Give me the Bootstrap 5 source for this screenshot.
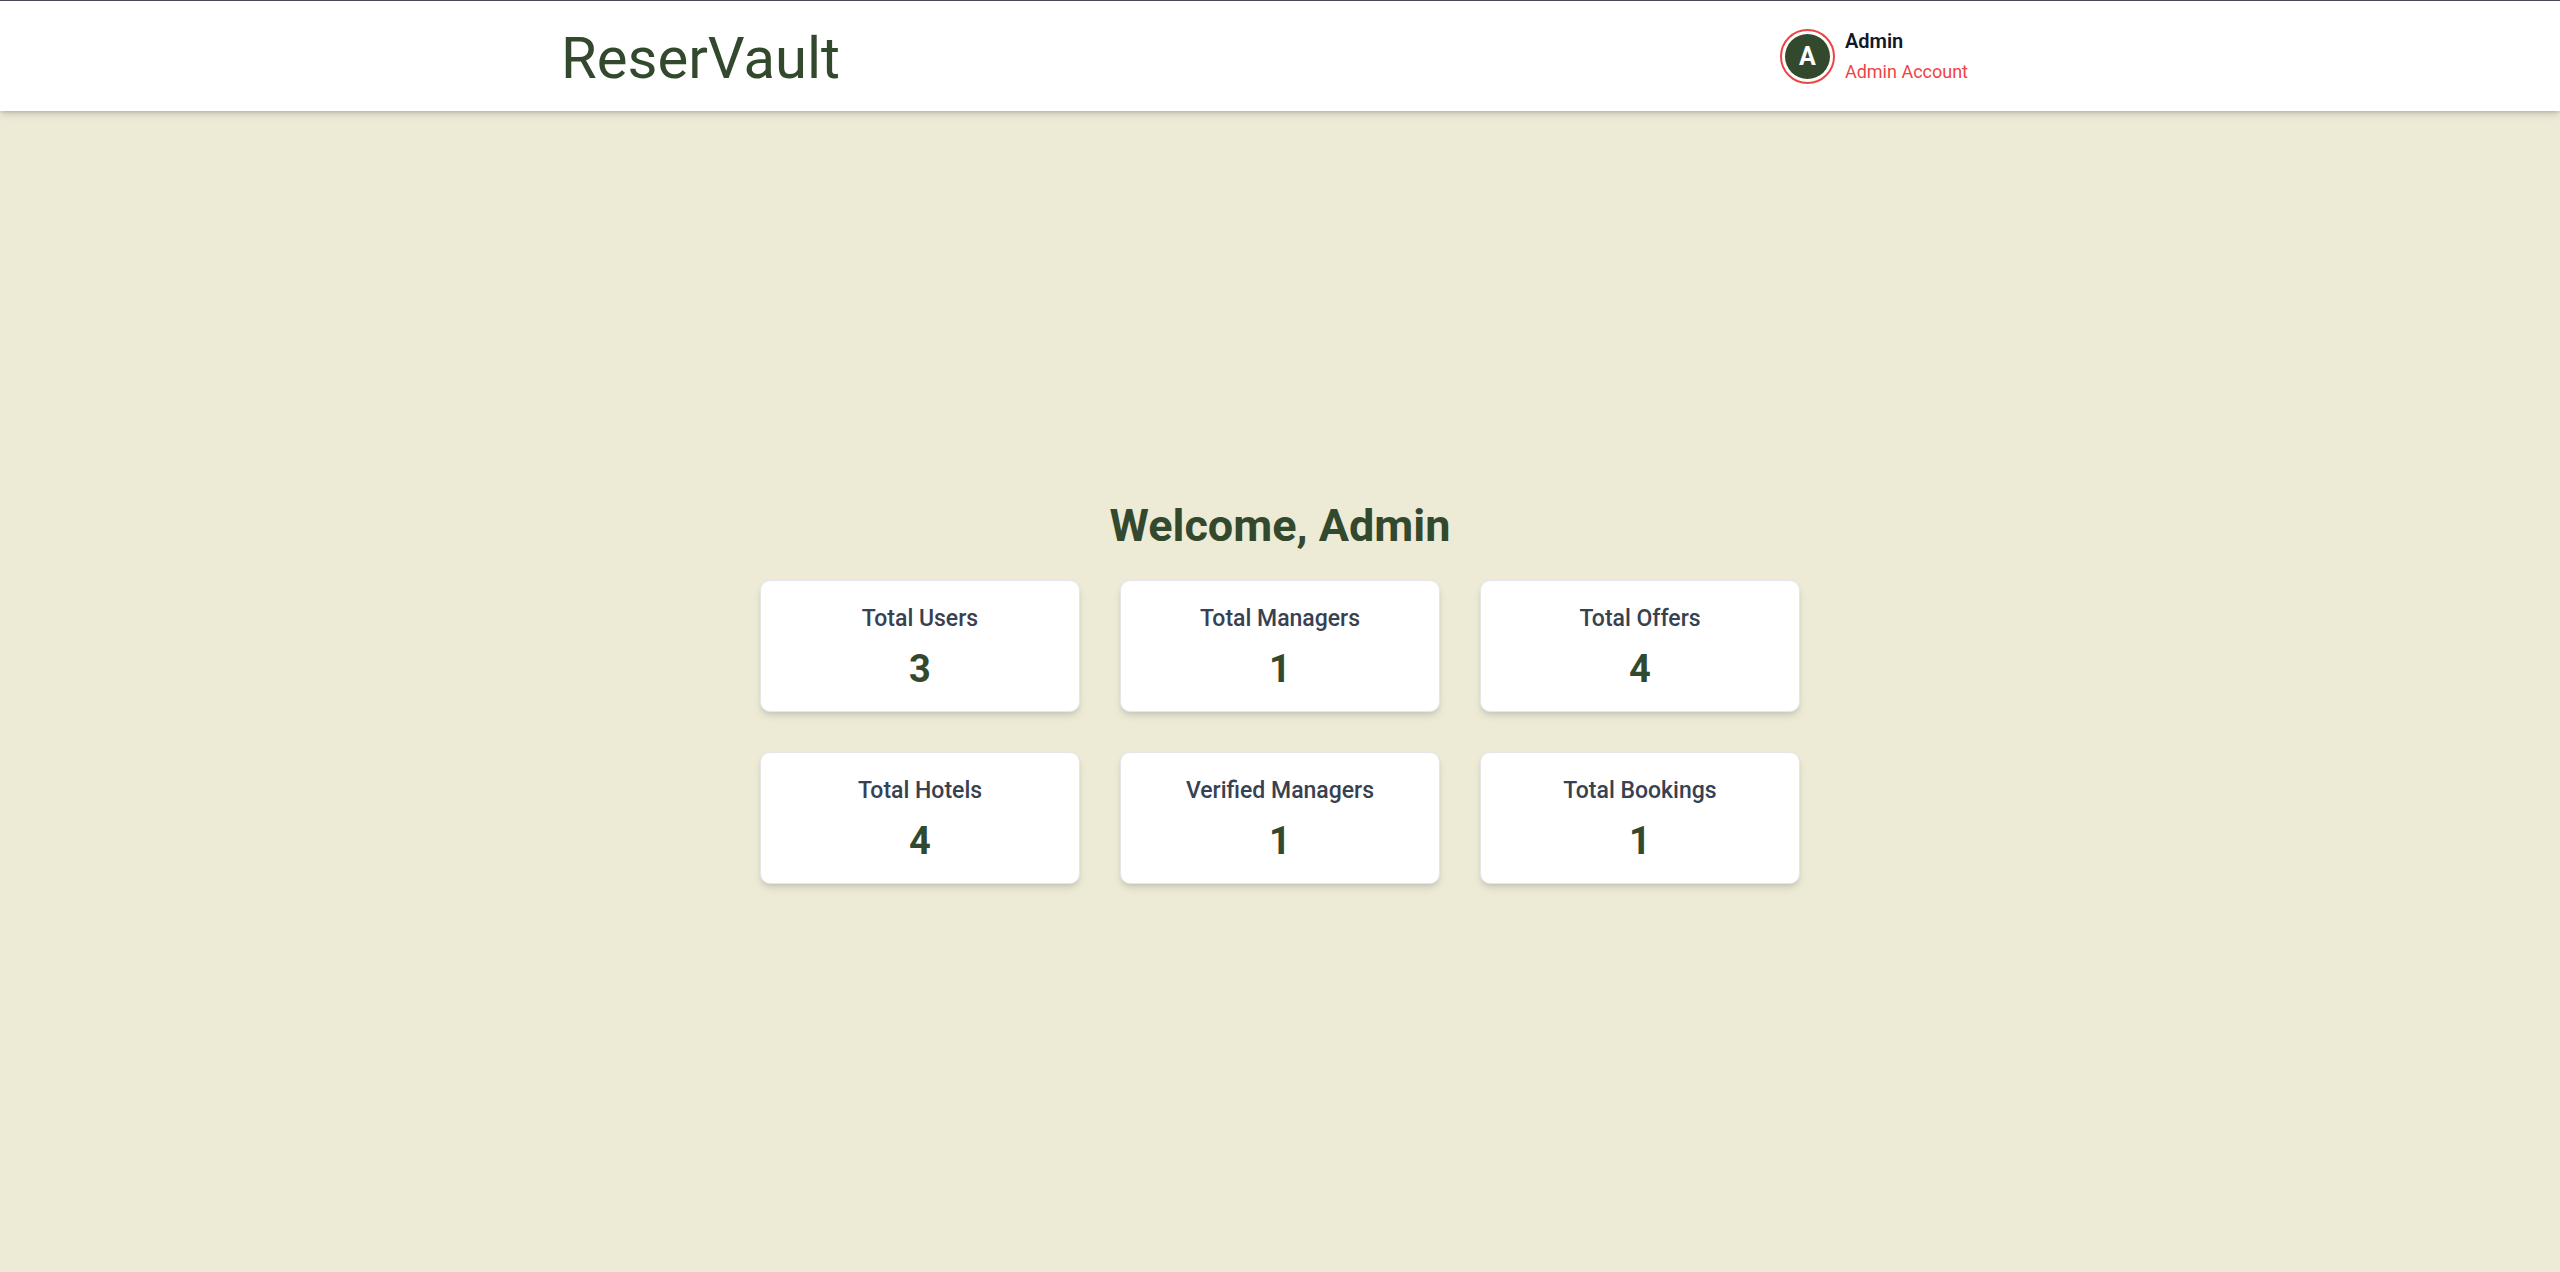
<!DOCTYPE html>
<html lang="en">
<head>
<meta charset="utf-8">
<meta name="viewport" content="width=device-width, initial-scale=1">
<title>ReserVault</title>
<link href="https://cdn.jsdelivr.net/npm/bootstrap@5.3.0/dist/css/bootstrap.min.css" rel="stylesheet">
<style>
  :root { --rv-green: #33492d; --rv-sand: #edebd6; }
  body { font-family: Roboto, "Liberation Sans", sans-serif; background: var(--rv-sand); }
  .site-header { border-top: 1px solid #4b4955; box-shadow: 0 5px 8px -1px rgba(0,0,0,.1), 0 3px 5px -2px rgba(0,0,0,.1), 0 1px 3px rgba(0,0,0,.1); }
  .header-inner { max-width: 1440px; min-height: 110px; }
  .brand { font-size: 58px; line-height: 76px; padding-top: 4px; padding-left: 1px; color: var(--rv-green); }
  .account { gap: 10px; margin-right: 32px; }
  .avatar { width: 55px; height: 55px; padding: 3px; border: 2px solid #ef4444; }
  .avatar-fill { background: var(--rv-green); font-size: 25px; line-height: 47px; font-weight: 700; }
  .account-name { font-size: 20px; line-height: 32px; font-weight: 600; color: #111827; }
  .account-role { font-size: 18px; line-height: 30px; color: #ef4444; }
  .welcome { font-size: 45px; line-height: 52px; margin-bottom: 28px; color: var(--rv-green); }
  .stats { display: grid; grid-template-columns: repeat(3, 320px); gap: 40px; }
  .stat { padding: 20px; gap: 10px; border: 1px solid #e5e7eb; border-radius: 10px; box-shadow: 0 5px 8px -1px rgba(0,0,0,.1), 0 3px 5px -2px rgba(0,0,0,.1); }
  .stat-label { font-size: 23px; line-height: 35px; font-weight: 500; color: #374151; }
  .stat-value { font-size: 38px; line-height: 47px; margin-bottom: -2px; color: var(--rv-green); }
  @media (max-width: 1100px) { .stats { grid-template-columns: 320px; } }
</style>
</head>
<body class="d-flex flex-column min-vh-100">
<header class="site-header bg-white">
  <div class="header-inner d-flex align-items-center justify-content-between mx-auto">
    <a href="#" class="brand text-decoration-none">ReserVault</a>
    <button type="button" class="account btn border-0 p-0 d-flex align-items-center text-start">
      <span class="avatar rounded-circle d-flex">
        <span class="avatar-fill rounded-circle text-white flex-fill d-flex align-items-center justify-content-center">A</span>
      </span>
      <span class="d-flex flex-column">
        <span class="account-name">Admin</span>
        <span class="account-role">Admin Account</span>
      </span>
    </button>
  </div>
</header>
<main class="flex-fill d-flex flex-column align-items-center justify-content-center">
  <h1 class="welcome fw-bold text-center">Welcome, Admin</h1>
  <section class="stats text-center" aria-label="Statistics">
    <div class="stat bg-white d-flex flex-column"><h2 class="stat-label m-0">Total Users</h2><p class="stat-value fw-bold">3</p></div>
    <div class="stat bg-white d-flex flex-column"><h2 class="stat-label m-0">Total Managers</h2><p class="stat-value fw-bold">1</p></div>
    <div class="stat bg-white d-flex flex-column"><h2 class="stat-label m-0">Total Offers</h2><p class="stat-value fw-bold">4</p></div>
    <div class="stat bg-white d-flex flex-column"><h2 class="stat-label m-0">Total Hotels</h2><p class="stat-value fw-bold">4</p></div>
    <div class="stat bg-white d-flex flex-column"><h2 class="stat-label m-0">Verified Managers</h2><p class="stat-value fw-bold">1</p></div>
    <div class="stat bg-white d-flex flex-column"><h2 class="stat-label m-0">Total Bookings</h2><p class="stat-value fw-bold">1</p></div>
  </section>
</main>
<script src="https://cdn.jsdelivr.net/npm/bootstrap@5.3.0/dist/js/bootstrap.bundle.min.js"></script>
</body>
</html>
